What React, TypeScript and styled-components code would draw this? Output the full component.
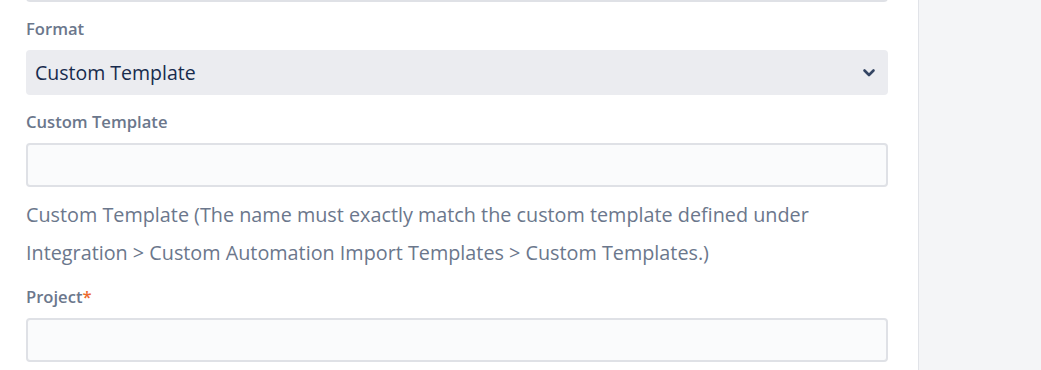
import React from "react";
import styled, { createGlobalStyle } from "styled-components";

const GlobalStyle = createGlobalStyle`
  html, body {
    margin: 0;
    padding: 0;
    background: #ffffff;
    overflow: hidden;
  }
  body {
    font-family: "Open Sans", "Noto Sans", sans-serif;
  }
`;

const Page = styled.div`
  display: grid;
  grid-template-columns: 918px 1fr;
  height: 370px;
  overflow: hidden;
`;

const Main = styled.main`
  padding: 0 30px 0 26px;
`;

const Side = styled.aside`
  background: #f4f5f7;
  border-left: 1px solid #e1e3e8;
`;

const Form = styled.form`
  margin-top: -42px;
  display: flex;
  flex-direction: column;
`;

const Field = styled.div`
  display: flex;
  flex-direction: column;
  padding-top: 16px;
`;

const Label = styled.label`
  font-size: 16.6px;
  font-weight: 600;
  line-height: 22px;
  color: #6b778c;
  margin-bottom: 10px;
`;

const Required = styled.span`
  color: #ec6a2c;
`;

const TextInput = styled.input`
  box-sizing: border-box;
  height: 44px;
  width: 100%;
  background: #fafbfc;
  border: 2px solid #dfe1e6;
  border-radius: 4px;
  padding: 0 8px;
  font: inherit;
  font-size: 19.5px;
  color: #172b4d;
  outline: none;
`;

const SelectBox = styled.div`
  box-sizing: border-box;
  height: 45px;
  display: flex;
  align-items: center;
  justify-content: space-between;
  background: #ebecf0;
  border-radius: 4px;
  padding: 0 12px 0 9px;
  font-size: 19.5px;
  color: #172b4d;
`;

const Help = styled.p`
  margin: 9px 0 -2px;
  font-size: 19.8px;
  line-height: 38px;
  color: #6b778c;
`;

const Chevron = () => (
  <svg width="14" height="14" viewBox="0 0 14 14" aria-hidden="true">
    <polyline
      points="2.5,4.5 7,9 11.5,4.5"
      fill="none"
      stroke="#344563"
      strokeWidth="2.6"
      strokeLinecap="round"
      strokeLinejoin="round"
    />
  </svg>
);

export default function App() {
  return (
    <>
      <GlobalStyle />
      <Page>
        <Main>
          <Form>
            <TextInput type="text" />
            <Field>
              <Label>Format</Label>
              <SelectBox>
                <span>Custom Template</span>
                <Chevron />
              </SelectBox>
            </Field>
            <Field>
              <Label>Custom Template</Label>
              <TextInput type="text" />
            </Field>
            <Help>
              Custom Template (The name must exactly match the custom template defined under
              Integration &gt; Custom Automation Import Templates &gt; Custom Templates.)
            </Help>
            <Field>
              <Label>
                Project<Required>*</Required>
              </Label>
              <TextInput type="text" />
            </Field>
          </Form>
        </Main>
        <Side />
      </Page>
    </>
  );
}
